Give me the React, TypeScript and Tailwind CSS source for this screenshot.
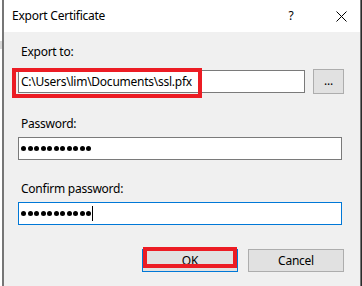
import React from 'react';

const font = { fontFamily: '"Noto Sans", "Open Sans", sans-serif' };

function Dots({ count }: { count: number }) {
  return (
    <div className="flex items-center gap-[1.5px]">
      {Array.from({ length: count }).map((_, i) => (
        <span key={i} className="block w-[5px] h-[5px] rounded-full bg-black" />
      ))}
    </div>
  );
}

export default function App() {
  return (
    <div className="w-[362px] h-[286px] flex bg-white overflow-hidden text-[12px] tracking-[-0.25px] text-black" style={font}>
      {/* sliver of the window behind */}
      <div className="w-[2px] h-full flex flex-col">
        <div className="h-[41px] bg-white" />
        <div className="h-[8px] bg-[#d9d9d9]" />
        <div className="flex-1 bg-white" />
      </div>

      <div className="w-[359px] h-full flex flex-col border-l-2 border-r border-[#767676] bg-[#f0f0f0]">
        {/* title bar */}
        <div className="h-[32px] bg-white flex items-center pl-[8px] shrink-0">
          <span className="leading-none">Export Certificate</span>
          <span className="ml-auto w-[12px] text-center leading-none">?</span>
          <svg className="ml-[39px] mr-[13px]" width="11" height="11" viewBox="0 0 11 11">
            <path d="M0.5 0.5 L10.5 10.5 M10.5 0.5 L0.5 10.5" stroke="#000" strokeWidth="1" />
          </svg>
        </div>

        {/* body */}
        <div className="relative flex flex-col pl-[14px] pr-[16px] pt-[12px]">
          <div className="h-[16px] leading-[16px] pl-[3px]">Export to:</div>
          <div className="flex items-center gap-[8px] mt-[9px]">
            <div className="w-[288px] h-[23px] bg-white border border-[#7a7a7a] flex items-center pl-[2px]">
              C:\Users\lim\Documents\ssl.pfx
            </div>
            <div className="w-[31px] h-[25px] bg-[#e1e1e1] border border-[#adadad] flex items-center justify-center leading-none pb-[2px]">
              ...
            </div>
          </div>

          <div className="h-[16px] leading-[16px] pl-[3px] mt-[22px]">Password:</div>
          <div className="w-[324px] h-[23px] bg-white border border-[#7a7a7a] flex items-center pl-[2px] mt-[5px]">
            <Dots count={11} />
          </div>

          <div className="h-[16px] leading-[16px] pl-[3px] mt-[21px]">Confirm password:</div>
          <div className="w-[324px] h-[23px] bg-white border border-[#0078d7] flex items-center pl-[2px] mt-[5px]">
            <Dots count={11} />
            <span className="block w-[1px] h-[15px] bg-black ml-[1px]" />
          </div>

          <div className="flex justify-end gap-[10px] mt-[24px]">
            <div className="w-[96px] h-[23px] bg-[#e1e1e1] border border-[#0078d7] flex items-center justify-center">
              OK
            </div>
            <div className="w-[96px] h-[23px] bg-[#e1e1e1] border border-[#adadad] flex items-center justify-center">
              Cancel
            </div>
          </div>

          {/* red annotation boxes */}
          <div className="absolute left-[8px] top-[36px] w-[190px] h-[30px] border-[4px] border-[#ec1c24]" />
          <div className="absolute left-[139px] top-[215px] w-[94px] h-[21px] border-[4px] border-[#ec1c24]" />
        </div>
      </div>

      <div className="w-[1px] h-full bg-[#2a2a2a]" />
    </div>
  );
}
